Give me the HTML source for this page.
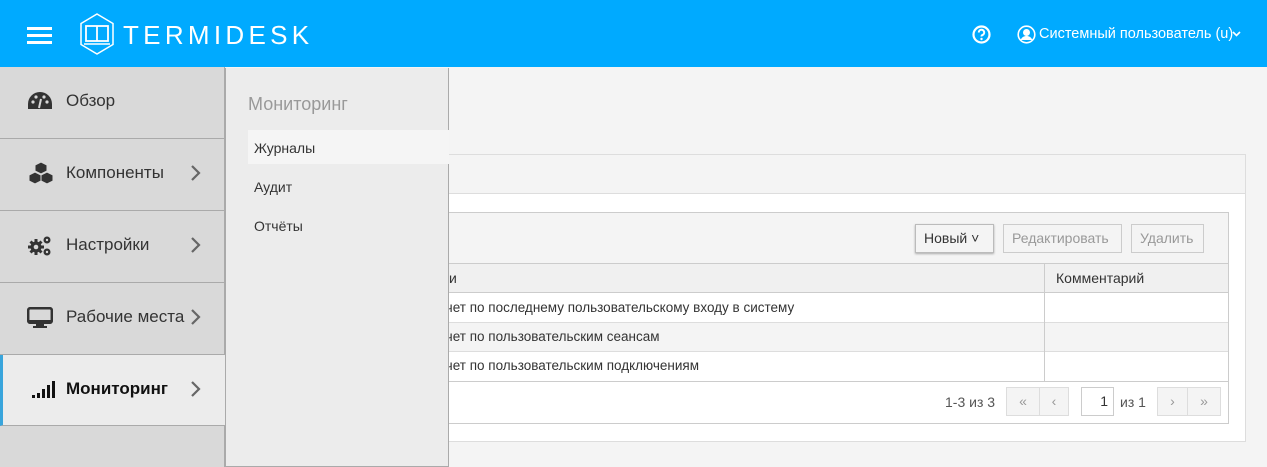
<!DOCTYPE html>
<html><head><meta charset="utf-8"><style>
*{box-sizing:border-box;margin:0;padding:0}
body{width:1267px;height:467px;overflow:hidden;background:#f4f4f4;font-family:"Liberation Sans","DejaVu Sans",sans-serif;position:relative;color:#333}
.hdr{position:absolute;left:0;top:0;width:1267px;height:67px;background:#00aaff;color:#fff}
.abs{position:absolute}
.side{position:absolute;left:0;top:67px;width:225px;height:400px;background:#d9d9d9;border-right:1px solid #aaa}
.item{position:absolute;left:0;width:225px;height:72px;border-bottom:1px solid #aaa;font-size:17px;color:#333}
.item .t{position:absolute;left:66px;top:24px}
.item .ch{position:absolute;left:190px;top:25px}
.item svg{position:absolute;left:27px;top:24px}
.fly{position:absolute;left:225px;top:68px;width:224px;height:399px;background:#ececec;border:1px solid #aaa;border-top:none}
.fly div{position:absolute;font-size:14px;color:#333}
.panel{position:absolute;left:440px;top:154px;width:806px;height:288px;background:#fff;border:1px solid #ddd}
.btn{position:absolute;top:224px;height:29px;border:1px solid #ccc;background:#f4f4f4;font-size:14px;line-height:27px;padding:0 8px;color:#999}
.pg{position:absolute;top:387px;height:29px;border:1px solid #ddd;background:#f4f4f4;color:#999;font-size:14px;text-align:center;line-height:27px}
</style></head><body>
<div class="hdr">
 <div class="abs" style="left:27px;top:27px;width:25px;height:3px;background:#fff"></div>
 <div class="abs" style="left:27px;top:34px;width:25px;height:3px;background:#fff"></div>
 <div class="abs" style="left:27px;top:41px;width:25px;height:3px;background:#fff"></div>
 <svg class="abs" style="left:79px;top:13px" width="36" height="42" viewBox="0 0 36 42"><polygon points="18,1 34,10.5 34,31.5 18,41 2,31.5 2,10.5" fill="none" stroke="#fff" stroke-width="1.5"/><rect x="7" y="13" width="22" height="15" fill="none" stroke="#fff" stroke-width="1.8"/><line x1="18" y1="13" x2="18" y2="28" stroke="#fff" stroke-width="1.8"/><line x1="5" y1="31" x2="31" y2="31" stroke="#fff" stroke-width="1.5"/></svg>
 <div class="abs" style="left:123px;top:20px;font-size:26px;letter-spacing:4.3px;font-weight:300">TERMIDESK</div>
 <svg class="abs" style="left:972px;top:25px" width="19" height="19" viewBox="0 0 19 19"><circle cx="9.5" cy="9.5" r="8" fill="none" stroke="#fff" stroke-width="2.2"/><path d="M6.8 7.5a2.7 2.7 0 1 1 3.6 2.5c-.7.3-.9.7-.9 1.5" fill="none" stroke="#fff" stroke-width="2"/><circle cx="9.5" cy="14" r="1.2" fill="#fff"/></svg>
 <svg class="abs" style="left:1017px;top:25px" width="19" height="19" viewBox="0 0 19 19"><circle cx="9.5" cy="9.5" r="8.3" fill="none" stroke="#fff" stroke-width="1.6"/><circle cx="9.5" cy="7.5" r="3.5" fill="#fff"/><path d="M3.5 15c1.5-3 3.5-4 6-4s4.5 1 6 4" fill="#fff"/></svg>
 <div class="abs" style="left:1039px;top:26px;font-size:14.5px">Системный пользователь (u)</div>
 <svg class="abs" style="left:1232px;top:31px" width="9" height="6" viewBox="0 0 9 6"><path d="M1 1l3.5 3.5L8 1" fill="none" stroke="#fff" stroke-width="1.6"/></svg>
</div>
<div class="side">
 <div class="item" style="top:0;height:72px"><svg width="26" height="20" viewBox="0 0 26 20"><path d="M13 1A12 12 0 0 0 1 13v5h24v-5A12 12 0 0 0 13 1z" fill="#333"/><circle cx="6" cy="11" r="1.6" fill="#d9d9d9"/><circle cx="9" cy="6" r="1.6" fill="#d9d9d9"/><circle cx="17" cy="6" r="1.6" fill="#d9d9d9"/><circle cx="20" cy="11" r="1.6" fill="#d9d9d9"/><path d="M12 17l2-9" stroke="#d9d9d9" stroke-width="2"/></svg><span class="t">Обзор</span></div>
 <div class="item" style="top:72px"><svg width="28" height="24" viewBox="0 0 28 24" style="top:22px"><g fill="#333" stroke="#d9d9d9" stroke-width="1"><path d="M14 1l6 3v6l-6 3-6-3V4z"/><path d="M8 11l6 3v6l-6 3-6-3v-6z"/><path d="M20 11l6 3v6l-6 3-6-3v-6z"/></g></svg><span class="t">Компоненты</span><svg class="ch" width="12" height="18" viewBox="0 0 12 18"><path d="M2 2l7 7-7 7" fill="none" stroke="#666" stroke-width="2.2"/></svg></div>
 <div class="item" style="top:144px"><svg width="26" height="22" viewBox="0 0 26 22"><g stroke="#333" stroke-width="3"><path d="M9 4v16M1 12h16M3.5 6.5l11 11M14.5 6.5l-11 11"/></g><circle cx="9" cy="12" r="5.5" fill="#333"/><circle cx="9" cy="12" r="2.3" fill="#d9d9d9"/><circle cx="20" cy="5" r="3.5" fill="#333"/><circle cx="20" cy="17" r="3.5" fill="#333"/><circle cx="20" cy="5" r="1.2" fill="#d9d9d9"/><circle cx="20" cy="17" r="1.2" fill="#d9d9d9"/></svg><span class="t">Настройки</span><svg class="ch" width="12" height="18" viewBox="0 0 12 18"><path d="M2 2l7 7-7 7" fill="none" stroke="#666" stroke-width="2.2"/></svg></div>
 <div class="item" style="top:216px"><svg width="26" height="22" viewBox="0 0 26 22"><rect x="1.2" y="1.2" width="23.6" height="14.6" rx="2" fill="none" stroke="#333" stroke-width="2.5"/><rect x="1" y="13" width="24" height="3" fill="#333"/><rect x="9" y="17" width="8" height="3" fill="#333"/><rect x="6" y="19" width="14" height="2" fill="#333"/></svg><span class="t">Рабочие места</span><svg class="ch" width="12" height="18" viewBox="0 0 12 18"><path d="M2 2l7 7-7 7" fill="none" stroke="#666" stroke-width="2.2"/></svg></div>
 <div class="item" style="top:288px;height:71px;background:#ececec;border-left:3px solid #39a5dc;width:226px"><svg width="26" height="20" viewBox="0 0 26 20" style="left:27px"><g fill="#111"><rect x="2" y="16" width="3" height="3"/><rect x="7" y="14" width="3" height="5"/><rect x="12" y="10" width="3" height="9"/><rect x="17" y="6" width="3" height="13"/><rect x="22" y="2" width="3" height="17"/></g></svg><span class="t" style="left:63px;font-weight:bold;color:#111">Мониторинг</span><svg class="ch" style="left:187px" width="12" height="18" viewBox="0 0 12 18"><path d="M2 2l7 7-7 7" fill="none" stroke="#666" stroke-width="2.2"/></svg></div>
</div>
<div class="panel">
 <div class="abs" style="left:0;top:0;width:804px;height:39px;background:#f4f4f4;border-bottom:1px solid #ddd"></div>
 <div class="abs" style="left:0;top:57px;width:788px;height:212px;border:1px solid #ccc;background:#fff">
  <div class="abs" style="left:0;top:0;width:786px;height:51px;background:#f4f4f4;border-bottom:1px solid #ccc"></div>
  <div class="abs" style="left:0;top:51px;width:786px;height:29px;background:#f0f0f0;border-bottom:1px solid #ccc"></div>
  <div class="abs" style="left:0;top:109px;width:786px;height:1px;background:#ddd"></div>
  <div class="abs" style="left:0;top:110px;width:786px;height:29px;background:#f4f4f4;border-bottom:1px solid #ddd"></div>
  <div class="abs" style="left:0;top:168px;width:786px;height:1px;background:#ccc"></div>
  <div class="abs" style="left:602px;top:51px;width:1px;height:117px;background:#ccc"></div>
  <div class="abs" style="left:-40px;top:57px;font-size:14px;color:#333">Названи</div>
  <div class="abs" style="left:614px;top:57px;font-size:14px;color:#333">Комментарий</div>
  <div class="abs" style="left:-13px;top:87px;font-size:13.5px">Отчет по последнему пользовательскому входу в систему</div>
  <div class="abs" style="left:-13px;top:116px;font-size:13.5px">Отчет по пользовательским сеансам</div>
  <div class="abs" style="left:-13px;top:145px;font-size:13.5px">Отчет по пользовательским подключениям</div>
 </div>
</div>
<div class="btn" style="left:915px;width:79px;background:#f4f4f4;color:#333;border-color:#bbb;box-shadow:0 1px 2px rgba(0,0,0,.3)">Новый ˅</div>
<div class="btn" style="left:1003px;width:119px">Редактировать</div>
<div class="btn" style="left:1131px;width:73px">Удалить</div>
<div class="abs" style="left:945px;top:394px;font-size:14px;color:#555">1-3 из 3</div>
<div class="pg" style="left:1006px;width:34px">«</div>
<div class="pg" style="left:1039px;width:30px">‹</div>
<div class="pg" style="left:1081px;width:33px;background:#fff;border-color:#ccc;color:#333;text-align:right;padding-right:5px">1</div>
<div class="abs" style="left:1120px;top:394px;font-size:14px;color:#555">из 1</div>
<div class="pg" style="left:1157px;width:31px">›</div>
<div class="pg" style="left:1187px;width:34px">»</div>
<div class="fly">
 <div style="left:22px;top:26px;font-size:18px;color:#999">Мониторинг</div>
 <div style="left:22px;top:62px;width:201px;height:34px;background:#f5f5f5"></div>
 <div style="left:28px;top:72px">Журналы</div>
 <div style="left:28px;top:111px">Аудит</div>
 <div style="left:28px;top:150px">Отчёты</div>
</div>
</body></html>
